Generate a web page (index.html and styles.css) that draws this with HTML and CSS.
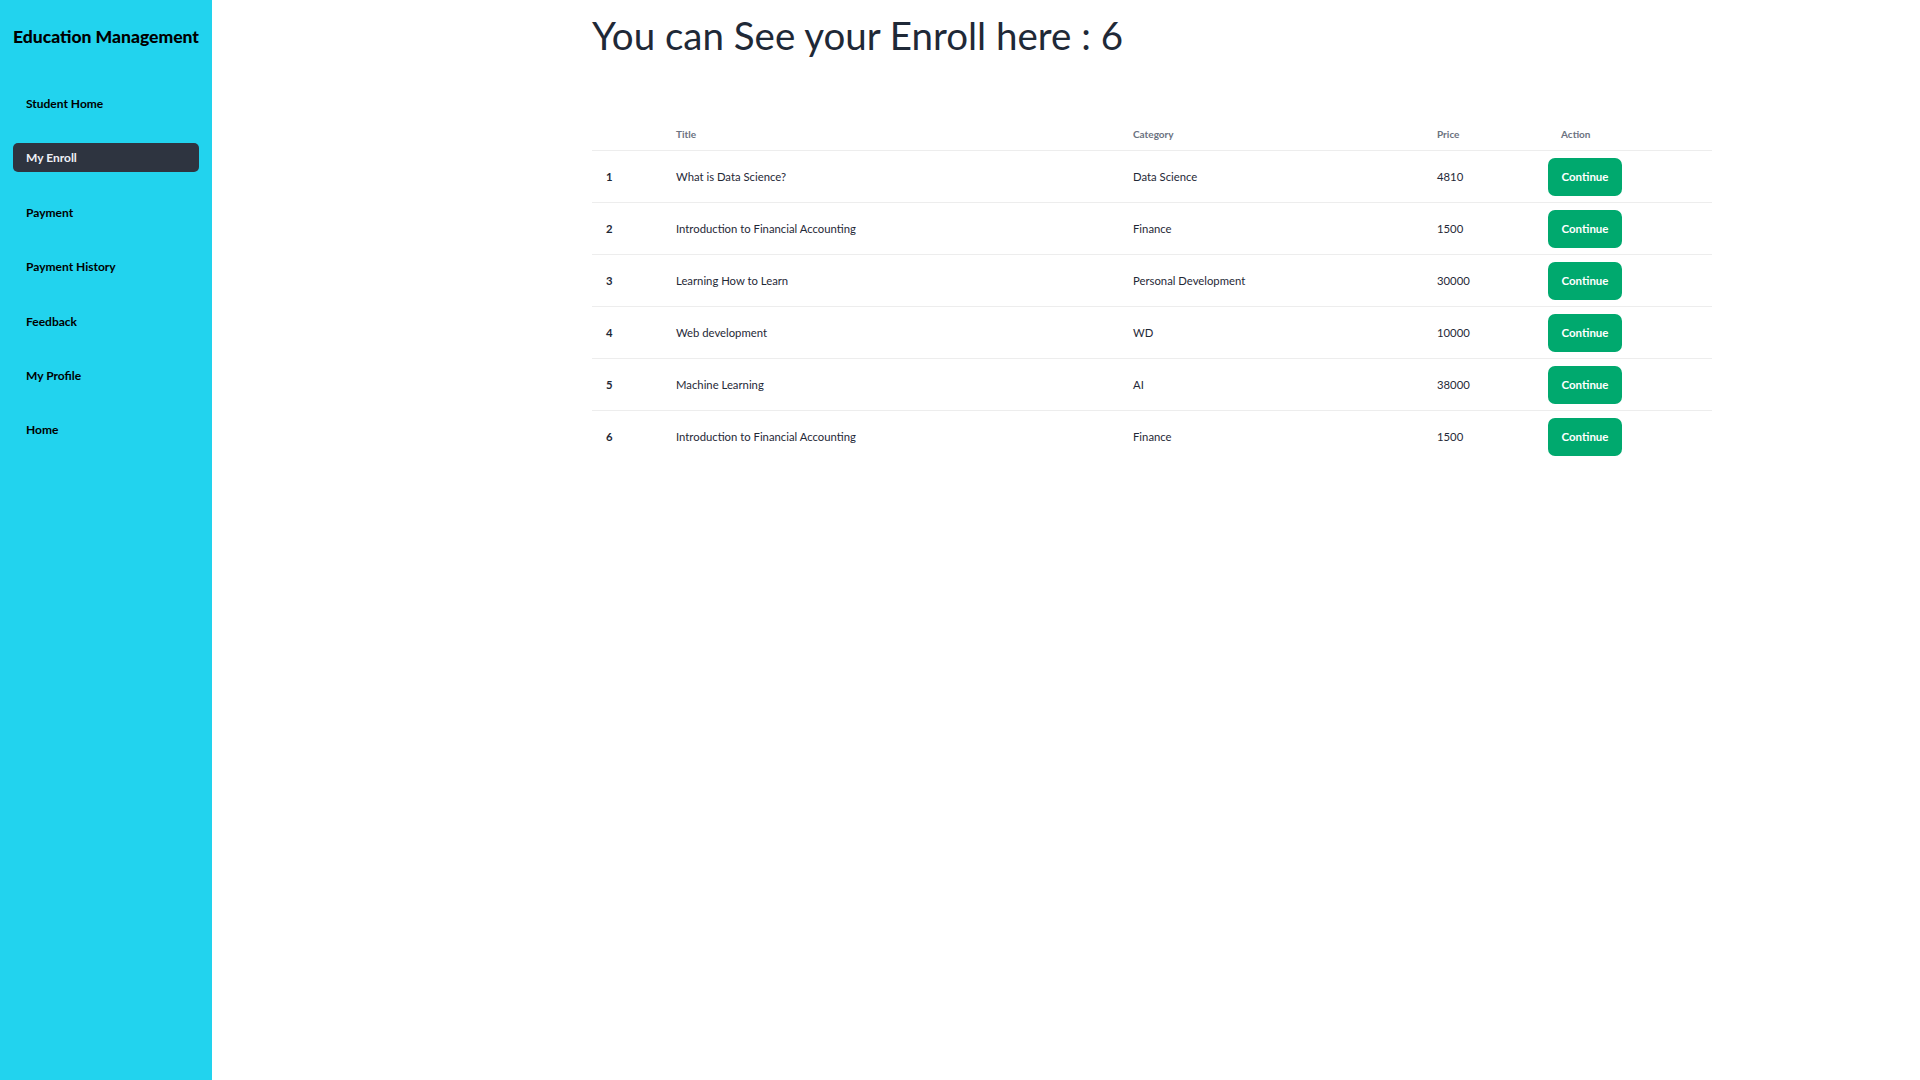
FILE: index.html
```html
<!DOCTYPE html>
<html lang="en">
<head>
<meta charset="utf-8">
<title>My Enroll</title>
<link rel="stylesheet" href="styles.css">
</head>
<body>
<div class="layout">
  <aside class="sidebar">
    <h2 class="brand">Education Management</h2>
    <ul class="menu">
      <li><a class="menu-link">Student Home</a></li>
      <li><a class="menu-link active">My Enroll</a></li>
      <li><a class="menu-link">Payment</a></li>
      <li><a class="menu-link">Payment History</a></li>
      <li><a class="menu-link">Feedback</a></li>
      <li><a class="menu-link">My Profile</a></li>
      <li><a class="menu-link">Home</a></li>
    </ul>
  </aside>
  <main class="main">
    <div class="content">
      <h1 class="title">You can See your Enroll here : 6</h1>
      <table class="table">
        <thead>
          <tr>
            <th class="c-num"></th>
            <th class="c-title">Title</th>
            <th class="c-cat">Category</th>
            <th class="c-price">Price</th>
            <th class="c-action">Action</th>
          </tr>
        </thead>
        <tbody>
          <tr><th>1</th><td>What is Data Science?</td><td>Data Science</td><td>4810</td><td><button class="btn">Continue</button></td></tr>
          <tr><th>2</th><td>Introduction to Financial Accounting</td><td>Finance</td><td>1500</td><td><button class="btn">Continue</button></td></tr>
          <tr><th>3</th><td>Learning How to Learn</td><td>Personal Development</td><td>30000</td><td><button class="btn">Continue</button></td></tr>
          <tr><th>4</th><td>Web development</td><td>WD</td><td>10000</td><td><button class="btn">Continue</button></td></tr>
          <tr><th>5</th><td>Machine Learning</td><td>AI</td><td>38000</td><td><button class="btn">Continue</button></td></tr>
          <tr><th>6</th><td>Introduction to Financial Accounting</td><td>Finance</td><td>1500</td><td><button class="btn">Continue</button></td></tr>
        </tbody>
      </table>
    </div>
  </main>
</div>
</body>
</html>
```

FILE: styles.css
```css
* { box-sizing: border-box; }
html, body { margin: 0; padding: 0; }
body {
  font-family: "Lato", "Open Sans", sans-serif;
  color: #1f2937;
  background: #ffffff;
}
.layout {
  display: flex;
  min-height: 100vh;
}
.sidebar {
  width: 212px;
  flex: 0 0 212px;
  background: #22d3ee;
  min-height: 100vh;
  padding: 0 13px;
}
.brand {
  margin: 0;
  padding-top: 27px;
  font-size: 17.5px;
  line-height: 20px;
  font-weight: 900;
  color: #000;
  text-align: center;
  white-space: nowrap;
}
.menu {
  list-style: none;
  margin: 0;
  padding: 42px 0 0;
  display: flex;
  flex-direction: column;
  gap: 25.4px;
}
.menu-link {
  display: block;
  height: 29px;
  line-height: 29px;
  padding: 0 13px;
  font-size: 12px;
  font-weight: 700;
  color: #000;
  border-radius: 5px;
}
.menu-link.active {
  background: #2e3440;
  color: #eef0f6;
}
.main {
  flex: 1;
  padding-left: 380px;
}
.content {
  width: 1120px;
}
.title {
  margin: 12px 0 0;
  font-size: 38.5px;
  line-height: 46px;
  font-weight: 400;
  color: #1f2937;
  white-space: nowrap;
}
.table {
  margin-top: 60px;
  width: 1120px;
  border-collapse: collapse;
  table-layout: fixed;
  font-size: 11.3px;
}
.table th, .table td {
  text-align: left;
  padding: 0 14px;
}
.table thead th {
  height: 32px;
  font-size: 10px;
  font-weight: 700;
  color: #6b7280;
  border-bottom: 1px solid #ededed;
}
.table tbody tr {
  height: 52px;
  border-bottom: 1px solid #ededed;
}
.table tbody tr:last-child { border-bottom: none; }
.table tbody th { font-weight: 700; color: #1f2937; }
.table tbody td { color: #1f2937; }
.c-num { width: 70px; }
.c-title { width: 457px; }
.c-cat { width: 304px; }
.c-price { width: 111px; }
.c-action { width: 178px; }
.table thead th.c-action { padding-left: 27px; }
.btn {
  width: 74px;
  height: 38px;
  margin-top: 1px;
  border: none;
  border-radius: 7px;
  background: #00a96e;
  color: #ffffff;
  font-family: inherit;
  font-size: 11.5px;
  font-weight: 700;
  padding: 0;
  cursor: pointer;
}
```
